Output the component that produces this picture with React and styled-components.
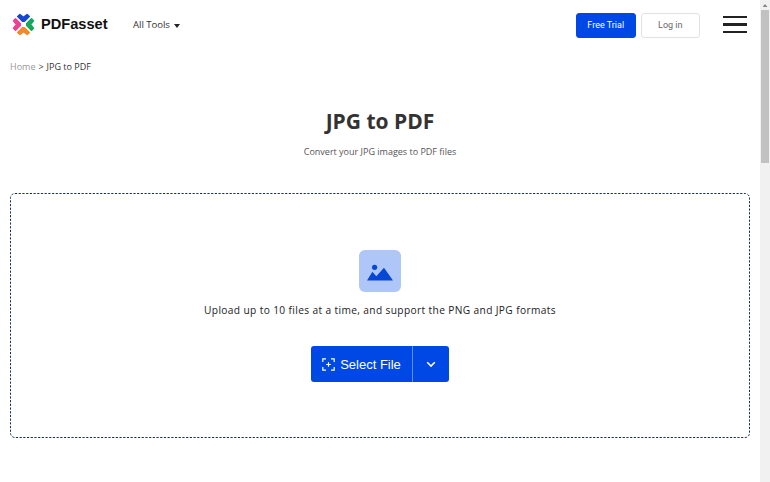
import styled, { createGlobalStyle } from "styled-components";

const GlobalStyle = createGlobalStyle`
  * {
    box-sizing: border-box;
  }
  body {
    margin: 0;
    overflow: hidden;
    background: #fff;
    font-family: "Open Sans", "Noto Sans", sans-serif;
    color: #333;
  }
  button {
    font-family: inherit;
    padding: 0;
    border: 0;
    cursor: pointer;
  }
`;

const Page = styled.div`
  display: flex;
  height: 482px;
`;

const Main = styled.div`
  flex: 1;
  padding: 0 10px;
  display: flex;
  flex-direction: column;
`;

const Header = styled.header`
  height: 50px;
  display: flex;
  align-items: center;
`;

const Brand = styled.div`
  display: flex;
  align-items: center;
  gap: 6px;
  width: 123px;
  padding: 0 0 2px 2px;
  font: bold 14.6px/24px "Liberation Sans", Arial, sans-serif;
  white-space: nowrap;
  color: #111;
`;

const Menu = styled.div`
  flex: 1;
  display: flex;
  align-items: center;
  gap: 4px;
  padding-bottom: 1px;
  font-size: 9.6px;
  letter-spacing: -0.05px;
`;

const Caret = styled.span`
  border: 3px solid transparent;
  border-top: 4px solid #222;
  border-bottom: 0;
  margin-top: 2px;
`;

const Actions = styled.div`
  display: flex;
  align-items: center;
  gap: 5px;
`;

const HeaderButton = styled.button`
  width: 59.5px;
  height: 25px;
  border-radius: 3px;
  font: 9px "Roboto", sans-serif;
  border: 1px solid ${(p) => (p.$primary ? "#0048e5" : "#e2e2e2")};
  background: ${(p) => (p.$primary ? "#0048e5" : "#fff")};
  color: ${(p) => (p.$primary ? "#fff" : "#666")};
`;

const Burger = styled.div`
  display: flex;
  flex-direction: column;
  gap: 5px;
  margin: 0 3px 1px 18px;
  span {
    width: 24px;
    height: 2.4px;
    background: #222;
  }
`;

const Breadcrumb = styled.nav`
  height: 34px;
  display: flex;
  align-items: center;
  gap: 3px;
  padding-bottom: 1px;
  font-size: 9px;
  color: #333;
`;

const Home = styled.span`
  color: #999;
`;

const Title = styled.h1`
  margin: 21px 0 0;
  font-size: 21px;
  line-height: 32px;
  text-align: center;
`;

const Subtitle = styled.p`
  margin: 7px 0 0;
  font-size: 9px;
  line-height: 16px;
  text-align: center;
  color: #555;
`;

const DropZone = styled.section`
  position: relative;
  margin-top: 33px;
  height: 245px;
  display: flex;
  flex-direction: column;
  align-items: center;
  padding-top: 57px;
`;

const Outline = styled.svg`
  position: absolute;
  inset: 0;
  pointer-events: none;
`;

const Hint = styled.p`
  margin: 8px 0 26px;
  font-size: 10.2px;
  line-height: 20px;
  letter-spacing: 0.36px;
  color: #222;
`;

const SelectGroup = styled.div`
  display: flex;
  width: 138px;
  height: 36px;
  border-radius: 3px;
  overflow: hidden;
`;

const SelectButton = styled.button`
  width: 101px;
  display: flex;
  align-items: center;
  justify-content: center;
  gap: 5px;
  background: #0048e5;
  color: #fff;
  font: 13px "Liberation Sans", Arial, sans-serif;
`;

const MoreButton = styled.button`
  flex: 1;
  background: #0048e5;
  border-left: 1px solid #5f8df1;
  display: grid;
  place-items: center;
`;

const Scrollbar = styled.div`
  width: 10px;
  background: #f1f1f1;
  display: flex;
  flex-direction: column;
  align-items: center;
`;

const ScrollArrow = styled.span`
  width: 5px;
  height: 3px;
  margin: 4px 0 3px;
  background: #888;
  clip-path: polygon(50% 0, 100% 100%, 0 100%);
`;

const Thumb = styled.div`
  width: 8px;
  height: 153px;
  background: #c1c1c1;
`;

const petals = ["#1647d0", "#16a75c", "#f28a2c", "#e94391"];

const Logo = () => (
  <svg width="23" height="23" viewBox="0 0 24 24" fill="none">
    {petals.map((color, i) => (
      <path
        key={color}
        transform={`rotate(${i * 90} 12 12)`}
        fill={color}
        stroke={color}
        strokeWidth="1.6"
        strokeLinejoin="round"
        d="M8.2 1.6L12 4.6L15.8 1.6L18 3.7L13 8.6H11L6 3.7Z"
      />
    ))}
  </svg>
);

const PictureIcon = () => (
  <svg width="42" height="42" viewBox="0 0 42 42">
    <rect width="42" height="42" rx="6" fill="#aec6f8" />
    <circle cx="15.6" cy="17.3" r="2.6" fill="#0747d6" />
    <path d="M8 30.5L13.4 21.7L17.3 26.2L25 17.8L34 30.5Z" fill="#0747d6" />
  </svg>
);

const ScanIcon = () => (
  <svg
    width="13"
    height="13"
    viewBox="0 0 13 13"
    fill="none"
    stroke="#fff"
    strokeWidth="1.2"
  >
    <path d="M4 .8H.8V4M9 .8h3.2V4M4 12.2H.8V9M9 12.2h3.2V9M6.5 4.2v4.6M4.2 6.5h4.6" />
  </svg>
);

const App = () => (
  <>
    <GlobalStyle />
    <Page>
      <Main>
        <Header>
          <Brand>
            <Logo />
            PDFasset
          </Brand>
          <Menu>
            All Tools
            <Caret />
          </Menu>
          <Actions>
            <HeaderButton $primary>Free Trial</HeaderButton>
            <HeaderButton>Log in</HeaderButton>
            <Burger>
              <span />
              <span />
              <span />
            </Burger>
          </Actions>
        </Header>
        <Breadcrumb>
          <Home>Home</Home>
          <span>&gt;</span>
          <span>JPG to PDF</span>
        </Breadcrumb>
        <Title>JPG to PDF</Title>
        <Subtitle>Convert your JPG images to PDF files</Subtitle>
        <DropZone>
          {/* finer dashes than border-style: dashed gives */}
          <Outline width="740" height="245" fill="none" aria-hidden="true">
            <rect
              x="0.5"
              y="0.5"
              width="739"
              height="244"
              rx="4.5"
              stroke="#1c3050"
              strokeDasharray="2.2 1.5"
            />
          </Outline>
          <PictureIcon />
          <Hint>
            Upload up to 10 files at a time, and support the PNG and JPG formats
          </Hint>
          <SelectGroup>
            <SelectButton>
              <ScanIcon />
              Select File
            </SelectButton>
            <MoreButton>
              <svg width="10" height="7" viewBox="0 0 10 7" fill="none">
                <path d="M1.2 1.2L5 5l3.8-3.8" stroke="#fff" strokeWidth="1.6" />
              </svg>
            </MoreButton>
          </SelectGroup>
        </DropZone>
      </Main>
      <Scrollbar>
        <ScrollArrow />
        <Thumb />
      </Scrollbar>
    </Page>
  </>
);

export default App;
